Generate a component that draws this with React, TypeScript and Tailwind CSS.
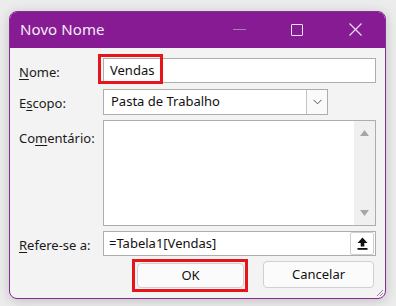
import React from 'react';

const font = { fontFamily: '"Noto Sans", "Open Sans", "Liberation Sans", sans-serif' };

const Label: React.FC<{ pre: string; key_: string; post: string }> = ({ pre, key_, post }) => (
  <span className="text-[13px] text-[#1a1a1a] leading-none">
    {pre}
    <span className="underline underline-offset-2 decoration-1">{key_}</span>
    {post}
  </span>
);

export default function App() {
  return (
    <div className="w-[396px] h-[306px] bg-[#ececec] pl-[9px] pt-[11px] overflow-hidden" style={font}>
      <div className="w-[377px] h-[288px] rounded-[8px] border border-[#8a2a96] bg-[#f3f3f3] shadow-[0_2px_12px_rgba(0,0,0,0.18)] overflow-hidden flex flex-col">
        {/* title bar */}
        <div className="h-[37px] -mt-px bg-[#861b93] flex items-center shrink-0 pl-[10px]">
          <div className="text-[15px] text-[#f6ecf7] tracking-[0.1px] whitespace-nowrap">Novo Nome</div>
          <div className="ml-auto flex h-full pr-px">
            <div className="w-[58px] flex items-center justify-center">
              <div className="w-[13px] h-px bg-[#b07ab8]" />
            </div>
            <div className="w-[58px] flex items-center justify-center">
              <div className="w-[12px] h-[12px] border border-[#f2e4f4] rounded-[1px]" />
            </div>
            <div className="w-[58px] flex items-center justify-center">
              <svg width="13" height="13" viewBox="0 0 13 13">
                <path d="M0.5 0.5 L12.5 12.5 M12.5 0.5 L0.5 12.5" stroke="#f2e4f4" strokeWidth="1.1" />
              </svg>
            </div>
          </div>
        </div>

        {/* body */}
        <div className="flex flex-col pl-[9px] pr-[9px] pt-[10px] relative flex-1">
          {/* Nome */}
          <div className="flex items-center h-[25px]">
            <div className="w-[84px]"><Label pre="" key_="N" post="ome:" /></div>
            <div className="relative flex-1 h-full">
              <div className="h-full bg-white border border-[#adadad] flex items-center pl-[6px] text-[13px] text-[#111]">Vendas</div>
              <div className="absolute left-[-5px] top-[-4px] w-[65px] h-[30px] border-[3px] border-[#e8141c]" />
            </div>
          </div>

          {/* Escopo */}
          <div className="flex items-center h-[26px] mt-[6px]">
            <div className="w-[84px]"><Label pre="E" key_="s" post="copo:" /></div>
            <div className="w-[225px] h-full bg-white border border-[#adadad] flex items-center">
              <span className="pl-[7px] text-[13px] text-[#111] flex-1">Pasta de Trabalho</span>
              <div className="w-[21px] h-full border-l border-[#c4c4c4] flex items-center justify-center bg-[#fafafa]">
                <svg width="9" height="6" viewBox="0 0 9 6">
                  <path d="M0.5 0.8 L4.5 4.8 L8.5 0.8" fill="none" stroke="#555" strokeWidth="1" />
                </svg>
              </div>
            </div>
          </div>

          {/* Comentario */}
          <div className="flex h-[106px] mt-[5px]">
            <div className="w-[84px] pt-[5px]"><Label pre="Co" key_="m" post="entário:" /></div>
            <div className="flex-1 h-full bg-white border border-[#adadad] flex justify-end">
              <div className="w-[21px] h-full bg-[#f0f0f0] flex flex-col items-center justify-between py-[9px]">
                <svg width="9" height="6" viewBox="0 0 9 6"><path d="M4.5 0 L9 6 L0 6 Z" fill="#a6a6a6" /></svg>
                <svg width="9" height="6" viewBox="0 0 9 6"><path d="M0 0 L9 0 L4.5 6 Z" fill="#a6a6a6" /></svg>
              </div>
            </div>
          </div>

          {/* Refere-se a */}
          <div className="flex items-center h-[25px] mt-[5px]">
            <div className="w-[84px]"><Label pre="" key_="R" post="efere-se a:" /></div>
            <div className="flex-1 h-full bg-white border border-[#adadad] flex items-center">
              <span className="pl-[5px] text-[13px] text-[#111] flex-1">=Tabela1[Vendas]</span>
              <div className="w-[24px] h-[23px] mr-px border border-[#cfcfcf] rounded-[2px] bg-white flex items-center justify-center">
                <svg width="11" height="13" viewBox="0 0 11 13">
                  <path d="M5.5 0.5 L10.5 6 L7.3 6 L7.3 9.5 L3.7 9.5 L3.7 6 L0.5 6 Z" fill="#111" />
                  <rect x="0.5" y="11" width="10" height="1.8" fill="#111" />
                </svg>
              </div>
            </div>
          </div>

          {/* buttons */}
          <div className="flex h-[25px] mt-[7px] pl-[118px] pr-[1px] gap-[19px]">
            <div className="relative w-[107px] h-full">
              <div className="h-full bg-[#fbfbfb] border border-[#d0d0d0] rounded-[4px] flex items-center justify-center text-[13px] text-[#111]">OK</div>
              <div className="absolute left-[-5px] top-[-4px] w-[116px] h-[33px] border-[3px] border-[#e8141c]" />
            </div>
            <div className="w-[111px] h-[27px] -mt-[2px] bg-[#fbfbfb] border border-[#d0d0d0] rounded-[4px] flex items-center justify-center text-[13px] text-[#111]">
              Cancelar
            </div>
          </div>

          <svg className="absolute right-[1px] bottom-[1px]" width="9" height="9" viewBox="0 0 9 9">
            <path d="M8 2 L2 8 M8 5 L5 8" stroke="#9a7aa0" strokeWidth="1" />
          </svg>
        </div>
      </div>
    </div>
  );
}
